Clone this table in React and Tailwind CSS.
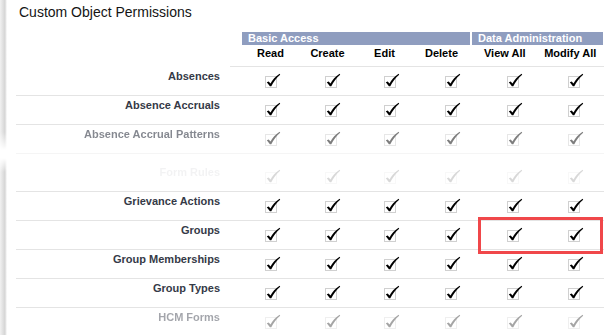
const rows = [
  { name: 'Absences' },
  { name: 'Absence Accruals' },
  { name: 'Absence Accrual Patterns', label: 'opacity-60', checks: 'opacity-50', line: 'border-[#f5f5f5]' },
  { name: 'Form Rules', label: 'opacity-[0.06]', checks: 'opacity-[0.15]', tall: true },
  { name: 'Grievance Actions' },
  { name: 'Groups', marked: true },
  { name: 'Group Memberships' },
  { name: 'Group Types' },
  { name: 'HCM Forms', label: 'opacity-45', checks: 'opacity-35' },
]

function Check() {
  return (
    <svg width="12" height="12" viewBox="0 0 12 12" className="overflow-visible">
      <rect x="0.5" y="0.5" width="11" height="11" fill="none" stroke="#a0a0a0" strokeDasharray="1 1" />
      <path
        d="M1.8 6.3 L3.7 5.5 L5.5 7.6 C7.6 3.8 10.2 0.8 14.6 -2.2 L15.2 -1.3 C11.3 2 8.3 6 6.3 10.3 L4.9 10.3 Z"
        fill="#000"
      />
    </svg>
  )
}

function Row({ row }) {
  return (
    <div
      className={`ml-[9px] flex border-b ${row.line || 'border-[#e4e4e4]'} ${
        row.tall ? 'h-[38px] pt-[9px]' : 'h-[29px]'
      }`}
    >
      <div
        className={`w-[204px] pt-[3px] text-right text-[11px] leading-[13px] font-bold text-[#353a47] ${
          row.label || ''
        }`}
      >
        {row.name}
      </div>
      <div className="w-[21px]" />
      <div className="relative grid grid-cols-[60px_59px_60px_62px_61px_61px]">
        {[0, 1, 2, 3, 4, 5].map((i) => (
          <div key={i} className={`flex justify-center pt-[9px] ${row.checks || ''}`}>
            <Check />
          </div>
        ))}
        {row.marked && (
          <div className="absolute left-[237px] top-[-4px] h-[37px] w-[125px] border-[3px] border-[#f0474a]" />
        )}
      </div>
    </div>
  )
}

export default function App() {
  return (
    <div className="flex h-[335px] w-[604px] overflow-hidden bg-white font-['Liberation_Sans',Arial,sans-serif]">
      <div className="w-[7px] shrink-0 bg-linear-to-r from-[#f1f1f1] via-[#d5d5d5] via-70% to-white [mask-image:linear-gradient(to_bottom,black_132px,transparent_150px,transparent_158px,black_172px)]" />
      <div className="flex-1">
        <h3 className="mt-[4px] pl-[12px] text-[14px] leading-[16px] text-[#141414]">
          Custom Object Permissions
        </h3>

        <div className="ml-[223px] mt-[12px] border-b border-[#e4e4e4] pl-[12px]">
          <div className="flex h-[13px] gap-[2px] text-[11px] leading-[13px] font-bold text-white">
            <div className="w-[228px] bg-[#8f9dbf] pl-[6px]">Basic Access</div>
            <div className="w-[131px] bg-[#8f9dbf] pl-[6px]">Data Administration</div>
          </div>
          <div className="flex h-[21px] gap-[2px] pt-[2px] text-[11px] leading-[13px] font-bold text-black">
            <div className="flex w-[228px]">
              {['Read', 'Create', 'Edit', 'Delete'].map((c) => (
                <div key={c} className="flex-1 text-center">
                  {c}
                </div>
              ))}
            </div>
            <div className="flex w-[131px]">
              {['View All', 'Modify All'].map((c) => (
                <div key={c} className="flex-1 text-center">
                  {c}
                </div>
              ))}
            </div>
          </div>
        </div>

        {rows.map((row) => (
          <Row key={row.name} row={row} />
        ))}
      </div>
    </div>
  )
}
